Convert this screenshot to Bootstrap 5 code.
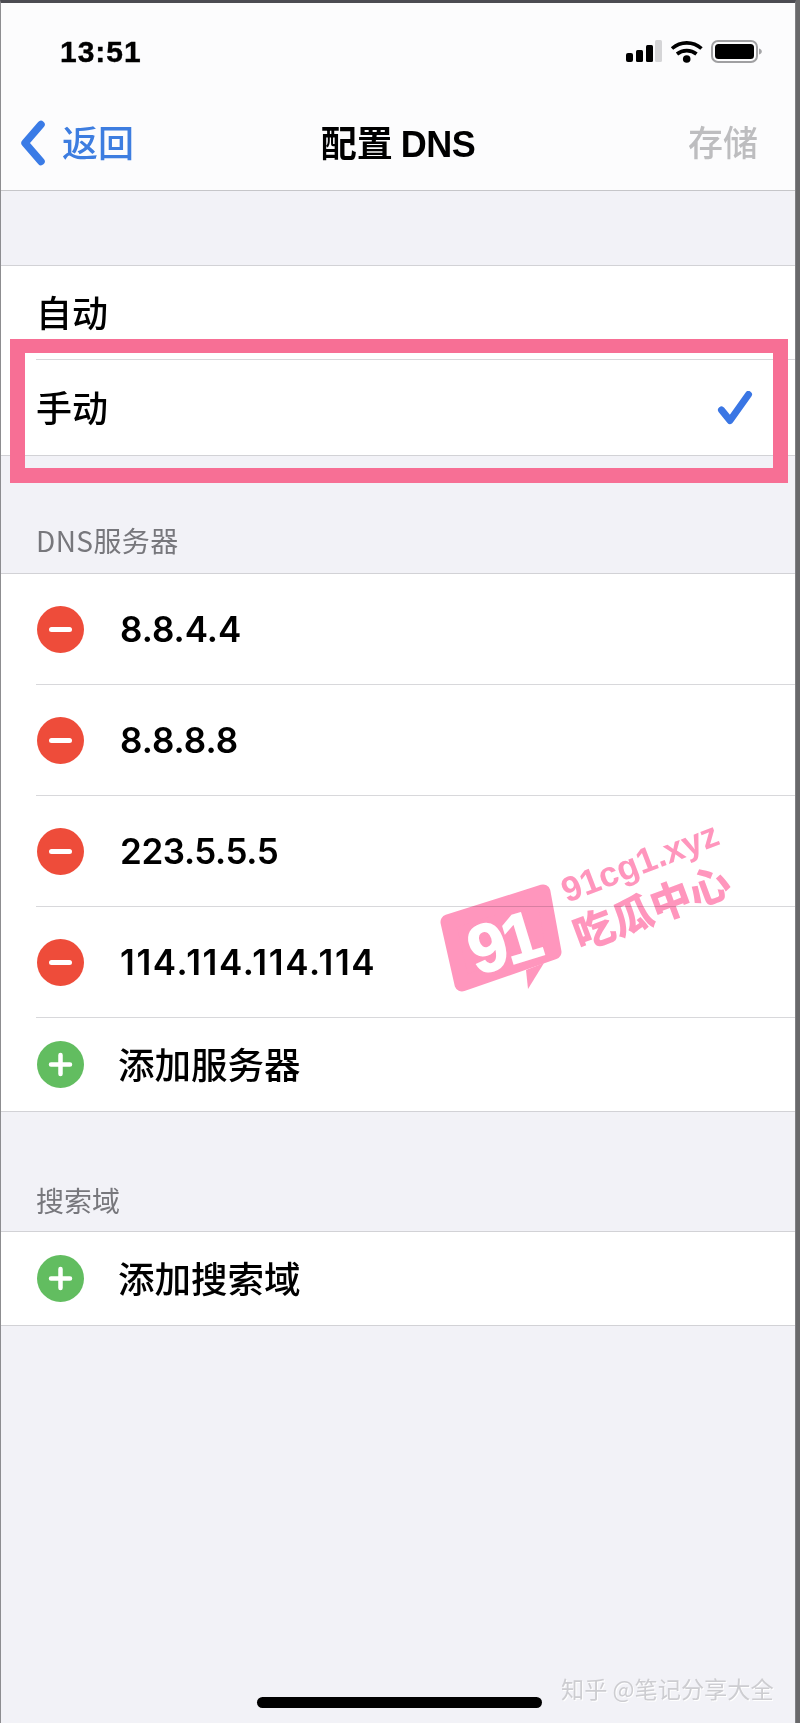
<!DOCTYPE html>
<html lang="zh">
<head>
<meta charset="utf-8">
<title>配置 DNS</title>
<link href="https://cdn.jsdelivr.net/npm/bootstrap@5.3.0/dist/css/bootstrap.min.css" rel="stylesheet">
<style>
html,body{margin:0;height:1723px;overflow:hidden;background:#69696b}
body{font-family:"Noto Sans CJK SC","Liberation Sans",sans-serif;color:#000}
.screen{position:relative;height:1723px;width:796px;border-top:3px solid #4c4c52;border-left:1px solid #8d8d90;border-right:1px solid #808083;background:#f2f2f7;overflow:hidden}
.status-area{height:188px;background:#fcfcfd;border-bottom:1px solid #c6c6c9}
.status-row{height:94px;padding:34px 33px 0 59px}
.clock{font:700 30px/1 "Liberation Sans",sans-serif;letter-spacing:1px;-webkit-text-stroke:.4px #000}
.bars{margin-top:3px}
.nav-row{height:91px;padding:0 37px 0 19px}
.nav-back{color:#3d7de0;font-size:36px;line-height:1;font-weight:500}
.nav-label{margin-bottom:4px}
.nav-title{font-size:36px;font-weight:700;line-height:1;position:absolute;left:0;right:0;text-align:center;top:120px}
.nav-title b{font-family:"Liberation Sans",sans-serif;letter-spacing:-.5px}
.nav-save{color:#bdbdbf;font-size:35px;line-height:1;font-weight:500;margin-bottom:4px}
.band{height:74px}
.group{background:#fff;border-top:1px solid #d2d2d6;border-bottom:1px solid #d2d2d6}
.cell{font-size:36px;font-weight:500;line-height:1;padding:0 42px 4px 35px;display:flex;align-items:center}
.choice-a{height:93px}
.choice-b{height:95px}
.check-mark{margin-top:4px}
.sep{height:1px;background:#d8d8db;margin-left:35px}
.sec-label{color:#77777c;font-size:28px;line-height:1;padding:0 0 0 35px;display:flex;align-items:flex-end}
.sec-dns{height:117px;padding-bottom:19px;letter-spacing:.4px}
.sec-search{height:119px;padding-bottom:17px}
.host{height:110px;padding-left:36px;display:flex;align-items:center}
.host.add-row{height:93px}
.host .addr{font:600 35px/1 Inter,sans-serif;margin-left:36px}
.host .addr.addr-tight{letter-spacing:-.4px}
.host .addr.addr-wide{letter-spacing:1.600px}
.add{font-size:36.500px;font-weight:500;line-height:1;margin-left:34px}
.round{width:47px;height:47px;flex:none;display:block}
.frame{position:absolute;left:9px;top:336px;width:778px;height:144px;border:15px solid #f76f95;border-top-width:14px}
.home-bar{position:absolute;left:256px;top:1694px;width:285px;height:11px;background:#000;border-radius:6px}
.credit{position:absolute;left:560px;top:1674px;font-size:23.200px;line-height:1;color:#cdcdd1;white-space:nowrap;text-shadow:1px 1px 0 #fff}
.wm{position:absolute;left:429px;top:807px;width:340px;height:200px;mix-blend-mode:multiply}
</style>
</head>
<body>
<div class="screen">
  <div class="status-area">
    <div class="status-row d-flex justify-content-between align-items-start">
      <span class="clock">13:51</span>
      <svg class="bars" width="136" height="24" viewBox="0 0 136 24" aria-hidden="true">
        <g fill="#000"><rect x="0" y="13" width="7" height="9" rx="2"/><rect x="10" y="10" width="7" height="12" rx="1.500"/><rect x="20" y="5" width="7" height="17" rx="1.500"/></g>
        <rect x="29" y="0" width="7" height="22" rx="1.500" fill="#d5d5d7"/>
        <path d="M46 8.500c8.500-7.500 21-7.500 29.500 0M51 14c5.500-4.500 14-4.500 19.500 0" fill="none" stroke="#000" stroke-width="3.600"/>
        <circle cx="60.700" cy="19" r="3.800" fill="#000"/>
        <rect x="86" y="1" width="45" height="21" rx="6" fill="none" stroke="#a0a0a2" stroke-width="2"/>
        <rect x="89" y="4" width="39" height="15" rx="3.500" fill="#000"/>
        <path d="M133 8.500c2 .6 2.800 1.600 2.800 3s-.8 2.400-2.800 3z" fill="#a5a5a7"/>
      </svg>
    </div>
    <div class="nav-row d-flex justify-content-between align-items-center">
      <span class="nav-back d-flex align-items-center gap-3">
        <svg width="26" height="46" viewBox="0 0 26 46" aria-hidden="true"><path d="M21 4.500L5 23l16 18.500" fill="none" stroke="#3a7be6" stroke-width="7.500" stroke-linecap="round" stroke-linejoin="round"/></svg>
        <span class="nav-label">返回</span>
      </span>
      <span class="nav-save">存储</span>
    </div>
    <div class="nav-title">配置 <b>DNS</b></div>
  </div>
  <div class="band"></div>
  <div class="group">
    <div class="cell choice-a">自动</div>
    <div class="sep"></div>
    <div class="cell choice-b justify-content-between">
      <span>手动</span>
      <svg class="check-mark" width="36" height="34" viewBox="0 0 36 34" aria-hidden="true"><path d="M4.500 19l8.500 10.500L31.500 3.500" fill="none" stroke="#3a76e4" stroke-width="7" stroke-linecap="round" stroke-linejoin="round"/></svg>
    </div>
  </div>
  <div class="sec-label sec-dns">DNS服务器</div>
  <div class="group">
    <div class="host">
      <svg class="round" viewBox="0 0 47 47" aria-hidden="true"><circle cx="23.500" cy="23.500" r="23.500" fill="#ee4c3a"/><rect x="12" y="21" width="23" height="5" rx="2.500" fill="#fff"/></svg>
      <span class="addr">8.8.4.4</span>
    </div>
    <div class="sep"></div>
    <div class="host">
      <svg class="round" viewBox="0 0 47 47" aria-hidden="true"><circle cx="23.500" cy="23.500" r="23.500" fill="#ee4c3a"/><rect x="12" y="21" width="23" height="5" rx="2.500" fill="#fff"/></svg>
      <span class="addr">8.8.8.8</span>
    </div>
    <div class="sep"></div>
    <div class="host">
      <svg class="round" viewBox="0 0 47 47" aria-hidden="true"><circle cx="23.500" cy="23.500" r="23.500" fill="#ee4c3a"/><rect x="12" y="21" width="23" height="5" rx="2.500" fill="#fff"/></svg>
      <span class="addr addr-tight">223.5.5.5</span>
    </div>
    <div class="sep"></div>
    <div class="host">
      <svg class="round" viewBox="0 0 47 47" aria-hidden="true"><circle cx="23.500" cy="23.500" r="23.500" fill="#ee4c3a"/><rect x="12" y="21" width="23" height="5" rx="2.500" fill="#fff"/></svg>
      <span class="addr addr-wide">114.114.114.114</span>
    </div>
    <div class="sep"></div>
    <div class="host add-row">
      <svg class="round" viewBox="0 0 47 47" aria-hidden="true"><circle cx="23.500" cy="23.500" r="23.500" fill="#62bd60"/><path d="M23.500 14v19M14 23.500h19" stroke="#fff" stroke-width="4.500" stroke-linecap="round"/></svg>
      <span class="add">添加服务器</span>
    </div>
  </div>
  <div class="sec-label sec-search">搜索域</div>
  <div class="group">
    <div class="host add-row">
      <svg class="round" viewBox="0 0 47 47" aria-hidden="true"><circle cx="23.500" cy="23.500" r="23.500" fill="#62bd60"/><path d="M23.500 14v19M14 23.500h19" stroke="#fff" stroke-width="4.500" stroke-linecap="round"/></svg>
      <span class="add">添加搜索域</span>
    </div>
  </div>
  <div class="frame"></div>
  <svg class="wm" viewBox="430 810 340 200" aria-hidden="true">
    <path d="M448 922L543 892L554 952L462 984Z" fill="#ff96bd" stroke="#ff96bd" stroke-width="15" stroke-linejoin="round"/>
    <path d="M526 970L528 989L544 963Z" fill="#ff96bd"/>
    <text x="510" y="965" transform="rotate(-17 510 965)" text-anchor="middle" font-family="Liberation Sans" font-weight="700" font-size="68" letter-spacing="-3" fill="#fff" stroke="#fff" stroke-width="1.500">91</text>
    <text x="567" y="903" transform="rotate(-21 567 903)" font-family="Liberation Sans" font-weight="700" font-size="35" fill="#ff96bd">91cg1.xyz</text>
    <text x="580" y="951" transform="rotate(-20.500 580 951)" font-family="Noto Sans CJK SC" font-weight="900" font-size="41" fill="#ff96bd">吃瓜中心</text>
  </svg>
  <div class="home-bar"></div>
  <div class="credit">知乎 @笔记分享大全</div>
</div>
</body>
</html>
